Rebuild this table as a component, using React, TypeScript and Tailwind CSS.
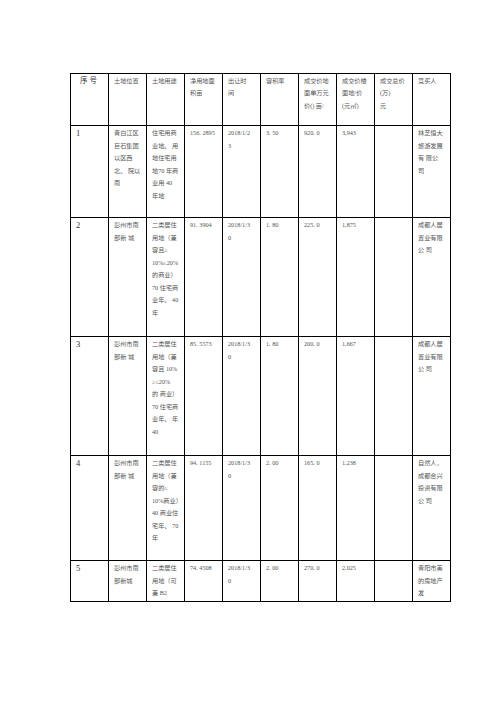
import React from "react";

type Row = { h: string; cells: string[][] };

const header: string[][] = [
  ["序号"],
  ["土地位置"],
  ["土地用途"],
  ["净用地面", "积亩"],
  ["出让时", "间"],
  ["容积率"],
  ["成交价地", "面单万元", "价() 亩/"],
  ["成交价楼", "面地/价", "(元㎡)"],
  ["成交总价", "(万)", "元"],
  ["竞买人"],
];

const rows: Row[] = [
  {
    h: "h-[92px]",
    cells: [
      ["1"],
      ["青白江区", "巨石集团", "以区西", "北、 院以", "南"],
      ["住宅用商", "业地、 用", "地住宅用", "地70 年商", "业用 40", "年地"],
      ["156. 2895"],
      ["2018/1/2", "3"],
      ["3. 50"],
      ["920. 0"],
      ["3,943"],
      [],
      ["林芝恒大", "旅游发展", "有 限公", "司"],
    ],
  },
  {
    h: "h-[119px]",
    cells: [
      ["2"],
      ["彭州市南", "部新 城"],
      ["二类居住", "用地（兼", "容且≥", "10%≤20%", "的商业）", "70 住宅商", "业年、 40", "年"],
      ["91. 3904"],
      ["2018/1/3", "0"],
      ["1. 80"],
      ["225. 0"],
      ["1,875"],
      [],
      ["成都人居", "置业有限", "公 司"],
    ],
  },
  {
    h: "h-[119px]",
    cells: [
      ["3"],
      ["彭州市南", "部新 城"],
      ["二类居住", "用地（兼", "容且 10%", "≥≤20%", "的 商业）", "70 住宅商", "业年、 年", "40"],
      ["85. 5573"],
      ["2018/1/3", "0"],
      ["1. 80"],
      ["200. 0"],
      ["1,667"],
      [],
      ["成都人居", "置业有限", "公 司"],
    ],
  },
  {
    h: "h-[105px]",
    cells: [
      ["4"],
      ["彭州市南", "部新 城"],
      ["二类居住", "用地（兼", "容的≤", "10%商业）", "40 商业住", "宅年、 70", "年"],
      ["94. 1155"],
      ["2018/1/3", "0"],
      ["2. 00"],
      ["165. 0"],
      ["1,238"],
      [],
      ["自然人，", "成都合兴", "投资有限", "公 司"],
    ],
  },
  {
    h: "h-[41px]",
    cells: [
      ["5"],
      ["彭州市南", "部新城"],
      ["二类居住", "用地（可", "兼 B2"],
      ["74. 4508"],
      ["2018/1/3", "0"],
      ["2. 00"],
      ["270. 0"],
      ["2,025"],
      [],
      ["青阳市美", "的房地产", "发"],
    ],
  },
];

const font = { fontFamily: '"Liberation Serif", "Noto Sans CJK SC", serif' };

export default function App() {
  return (
    <div className="w-[496px] h-[702px] bg-white pt-[73px] pl-[70px]" style={font}>
      <table className="table-fixed border-collapse w-[381px] text-[#555]">
        <colgroup>
          {header.map((_, i) => (
            <col key={i} className="w-[38px]" />
          ))}
        </colgroup>
        <tbody>
          <tr className="h-[52px]">
            {header.map((lines, i) => (
              <td
                key={i}
                className={
                  "border border-black align-top pt-[1px] whitespace-nowrap " +
                  (i === 0
                    ? "text-center text-[7.5px] leading-[12px] tracking-[2px] text-[#333]"
                    : "pl-[5px] text-[6.2px] leading-[12.3px]")
                }
              >
                {lines.map((l, j) => (
                  <div key={j}>{l}</div>
                ))}
              </td>
            ))}
          </tr>
          {rows.map((r, ri) => (
            <tr key={ri} className={r.h}>
              {r.cells.map((lines, i) => (
                <td
                  key={i}
                  className={
                    "border border-black align-top pt-[1px] pl-[5px] whitespace-nowrap " +
                    (i === 0
                      ? "text-[8.5px] leading-[12.5px] text-[#333]"
                      : "text-[6.2px] leading-[12.5px]")
                  }
                >
                  {lines.map((l, j) => (
                    <div key={j}>{l}</div>
                  ))}
                </td>
              ))}
            </tr>
          ))}
        </tbody>
      </table>
    </div>
  );
}
